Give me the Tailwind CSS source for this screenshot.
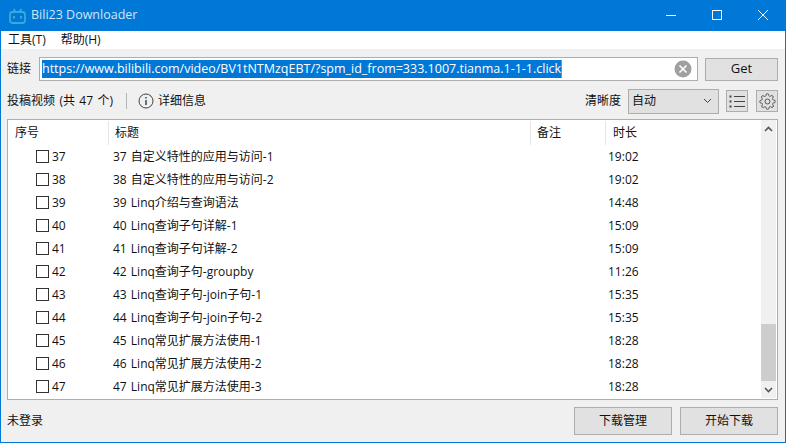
<!DOCTYPE html>
<html lang="zh">
<head>
    <meta charset="UTF-8" />
    <title>Bili23 Downloader</title>
    <script src="https://cdn.jsdelivr.net/npm/@tailwindcss/browser@4"></script>
</head>
<body class="w-[786px] h-[443px] overflow-hidden bg-[#f0f0f0] text-[13px] text-[#111] font-['Open_Sans','Noto_Sans_CJK_SC',sans-serif]">
<div class="w-[786px] h-[443px] flex flex-col border-x border-b border-[#0078d7]">

    <!-- title bar -->
    <div class="h-[31px] shrink-0 -mx-px bg-[#0078d7] flex items-center text-white">
        <svg class="ml-[9px] w-[17px] h-[16px]" viewBox="0 0 17 16" fill="none" stroke="#39a9dc" stroke-width="1.8">
            <rect x="1" y="4" width="15" height="11" rx="2.5"/>
            <path d="M4.5 1l2.5 3M12.5 1l-2.5 3"/>
            <path d="M5 8v2.5M12 8v2.5" stroke-width="2"/>
        </svg>
        <span class="ml-[5px] text-[12.5px] text-[#cfe6f7]">Bili23 Downloader</span>
        <div class="ml-auto flex items-center">
            <svg class="w-[46px] h-[31px]" viewBox="0 0 46 31" stroke="#fff" fill="none"><path d="M18 15.500h10"/></svg>
            <svg class="w-[46px] h-[31px]" viewBox="0 0 46 31" stroke="#fff" fill="none"><rect x="18.500" y="10.500" width="9" height="9"/></svg>
            <svg class="w-[46px] h-[31px]" viewBox="0 0 46 31" stroke="#fff" fill="none"><path d="M18 10l10 10M28 10l-10 10"/></svg>
        </div>
    </div>

    <!-- menu -->
    <div class="h-[18px] shrink-0 bg-white flex items-center text-[12px] pl-[7px] gap-[15px]">
        <span>工具(T)</span>
        <span>帮助(H)</span>
    </div>

    <!-- link row -->
    <div class="mt-[8px] h-[24px] shrink-0 flex items-center pl-[6px]">
        <span class="w-[32px] text-[12px]">链接</span>
        <div class="w-[659px] h-[24px] bg-white border border-[#adadad] flex items-center pl-[2px] pr-[5px]">
            <span class="bg-[#0078d7] text-white h-[18px] leading-[18px] text-[12.5px] whitespace-nowrap border-r border-[#e87d0d]">https://www.bilibili.com/video/BV1tNTMzqEBT/?spm_id_from=333.1007.tianma.1-1-1.click</span>
            <svg class="ml-auto w-[18px] h-[18px]" viewBox="0 0 18 18">
                <circle cx="9" cy="9" r="8.500" fill="#a0a0a0"/>
                <path d="M5.500 5.500l7 7M12.500 5.500l-7 7" stroke="#fff" stroke-width="1.600"/>
            </svg>
        </div>
        <button class="ml-[7px] w-[73px] h-[23px] bg-[#e1e1e1] border border-[#adadad] text-[13px]">Get</button>
    </div>

    <!-- toolbar row -->
    <div class="mt-[7px] h-[26px] shrink-0 flex items-center pl-[6px] text-[12px]">
        <span class="[word-spacing:1.3px]">投稿视频 (共 47 个)</span>
        <span class="ml-[13px] w-px h-[16px] bg-[#b5b5b5]"></span>
        <svg class="ml-[11px] w-[16px] h-[16px]" viewBox="0 0 16 16" fill="none" stroke="#444">
            <circle cx="8" cy="8" r="7"/>
            <path d="M8 7v5" stroke-width="1.500"/>
            <path d="M8 4v1.500" stroke-width="1.500"/>
        </svg>
        <span class="ml-[4px]">详细信息</span>
        <span class="ml-auto">清晰度</span>
        <div class="ml-[7px] w-[91px] h-[25px] bg-[#e1e1e1] border border-[#adadad] flex items-center pl-[3px] pr-[6px]">
            <span>自动</span>
            <svg class="ml-auto w-[9px] h-[6px]" viewBox="0 0 9 6" fill="none" stroke="#444"><path d="M1 1l3.500 3.500L8 1"/></svg>
        </div>
        <div class="ml-[7px] w-[22px] h-[22px] bg-[#e1e1e1] border border-[#adadad] flex items-center justify-center">
            <svg class="w-[17px] h-[13px]" viewBox="0 0 17 13" fill="none" stroke="#444">
                <path d="M5 1.500h11M5 6.500h11M5 11.500h11"/>
                <path d="M0.500 1.500h2M0.500 6.500h2M0.500 11.500h2" stroke-width="2"/>
            </svg>
        </div>
        <div class="ml-[8px] mr-[7px] w-[22px] h-[22px] bg-[#e1e1e1] border border-[#adadad] flex items-center justify-center">
            <svg class="w-[17px] h-[17px]" viewBox="0 0 24 24" fill="none" stroke="#555" stroke-width="1.400">
                <circle cx="12" cy="12" r="3.500"/>
                <path d="M19.400 15a1.650 1.650 0 0 0 .33 1.820l.06.06a2 2 0 1 1-2.830 2.830l-.06-.06a1.650 1.650 0 0 0-2.800 1.170V21a2 2 0 1 1-4 0v-.09A1.650 1.650 0 0 0 7.300 19.800l-.06.06a2 2 0 1 1-2.830-2.830l.06-.06a1.650 1.650 0 0 0-1.170-2.800H3a2 2 0 1 1 0-4h.09A1.650 1.650 0 0 0 4.200 7.300l-.06-.06a2 2 0 1 1 2.830-2.830l.06.06a1.650 1.650 0 0 0 2.800-1.170V3a2 2 0 1 1 4 0v.09a1.650 1.650 0 0 0 2.800 1.170l.06-.06a2 2 0 1 1 2.830 2.830l-.06.06a1.650 1.650 0 0 0 1.170 2.800H21a2 2 0 1 1 0 4h-.09A1.650 1.650 0 0 0 19.400 15z"/>
            </svg>
        </div>
    </div>

    <!-- list -->
    <div class="mt-[5px] ml-[6px] w-[771px] h-[281px] shrink-0 bg-white border border-[#adadad] flex text-[12px]">
        <div class="w-[753px] flex flex-col">
            <div class="h-[25px] shrink-0 flex items-center">
                <div class="w-[101px] h-[24px] pl-[7px] flex items-center border-r border-[#e5e5e5]">序号</div>
                <div class="w-[422px] h-[24px] pl-[6px] flex items-center border-r border-[#e5e5e5]">标题</div>
                <div class="w-[75px] h-[24px] pl-[6px] flex items-center border-r border-[#e5e5e5]">备注</div>
                <div class="pl-[7px]">时长</div>
            </div>
            <div class="flex flex-col [word-spacing:1px]">
                <div class="h-[23px] flex items-center"><span class="ml-[28px] w-[13px] h-[13px] border border-[#333]"></span><span class="ml-[3px] w-[61px]">37</span><span class="w-[495px]">37 自定义特性的应用与访问-1</span><span>19:02</span></div>
                <div class="h-[23px] flex items-center"><span class="ml-[28px] w-[13px] h-[13px] border border-[#333]"></span><span class="ml-[3px] w-[61px]">38</span><span class="w-[495px]">38 自定义特性的应用与访问-2</span><span>19:02</span></div>
                <div class="h-[23px] flex items-center"><span class="ml-[28px] w-[13px] h-[13px] border border-[#333]"></span><span class="ml-[3px] w-[61px]">39</span><span class="w-[495px]">39 Linq介绍与查询语法</span><span>14:48</span></div>
                <div class="h-[23px] flex items-center"><span class="ml-[28px] w-[13px] h-[13px] border border-[#333]"></span><span class="ml-[3px] w-[61px]">40</span><span class="w-[495px]">40 Linq查询子句详解-1</span><span>15:09</span></div>
                <div class="h-[23px] flex items-center"><span class="ml-[28px] w-[13px] h-[13px] border border-[#333]"></span><span class="ml-[3px] w-[61px]">41</span><span class="w-[495px]">41 Linq查询子句详解-2</span><span>15:09</span></div>
                <div class="h-[23px] flex items-center"><span class="ml-[28px] w-[13px] h-[13px] border border-[#333]"></span><span class="ml-[3px] w-[61px]">42</span><span class="w-[495px]">42 Linq查询子句-groupby</span><span>11:26</span></div>
                <div class="h-[23px] flex items-center"><span class="ml-[28px] w-[13px] h-[13px] border border-[#333]"></span><span class="ml-[3px] w-[61px]">43</span><span class="w-[495px]">43 Linq查询子句-join子句-1</span><span>15:35</span></div>
                <div class="h-[23px] flex items-center"><span class="ml-[28px] w-[13px] h-[13px] border border-[#333]"></span><span class="ml-[3px] w-[61px]">44</span><span class="w-[495px]">44 Linq查询子句-join子句-2</span><span>15:35</span></div>
                <div class="h-[23px] flex items-center"><span class="ml-[28px] w-[13px] h-[13px] border border-[#333]"></span><span class="ml-[3px] w-[61px]">45</span><span class="w-[495px]">45 Linq常见扩展方法使用-1</span><span>18:28</span></div>
                <div class="h-[23px] flex items-center"><span class="ml-[28px] w-[13px] h-[13px] border border-[#333]"></span><span class="ml-[3px] w-[61px]">46</span><span class="w-[495px]">46 Linq常见扩展方法使用-2</span><span>18:28</span></div>
                <div class="h-[23px] flex items-center"><span class="ml-[28px] w-[13px] h-[13px] border border-[#333]"></span><span class="ml-[3px] w-[61px]">47</span><span class="w-[495px]">47 Linq常见扩展方法使用-3</span><span>18:28</span></div>
            </div>
        </div>
        <!-- scrollbar -->
        <div class="w-[15px] h-[278px] bg-[#f0f0f0] flex flex-col">
            <div class="h-[17px] flex items-center justify-center">
                <svg class="w-[9px] h-[6px]" viewBox="0 0 9 6" fill="none" stroke="#555" stroke-width="1.600"><path d="M1 5l3.500-3.500L8 5"/></svg>
            </div>
            <div class="mt-auto h-[57px] bg-[#cdcdcd]"></div>
            <div class="h-[17px] flex items-center justify-center">
                <svg class="w-[9px] h-[6px]" viewBox="0 0 9 6" fill="none" stroke="#555" stroke-width="1.600"><path d="M1 1l3.500 3.500L8 1"/></svg>
            </div>
        </div>
    </div>

    <!-- bottom -->
    <div class="mt-[7px] flex items-center pl-[6px] text-[12px]">
        <span>未登录</span>
        <button class="ml-auto w-[98px] h-[28px] bg-[#e1e1e1] border border-[#adadad] text-[12px]">下载管理</button>
        <button class="ml-[8px] mr-[7px] w-[98px] h-[28px] bg-[#e1e1e1] border border-[#adadad] text-[12px]">开始下载</button>
    </div>
</div>
</body>
</html>
